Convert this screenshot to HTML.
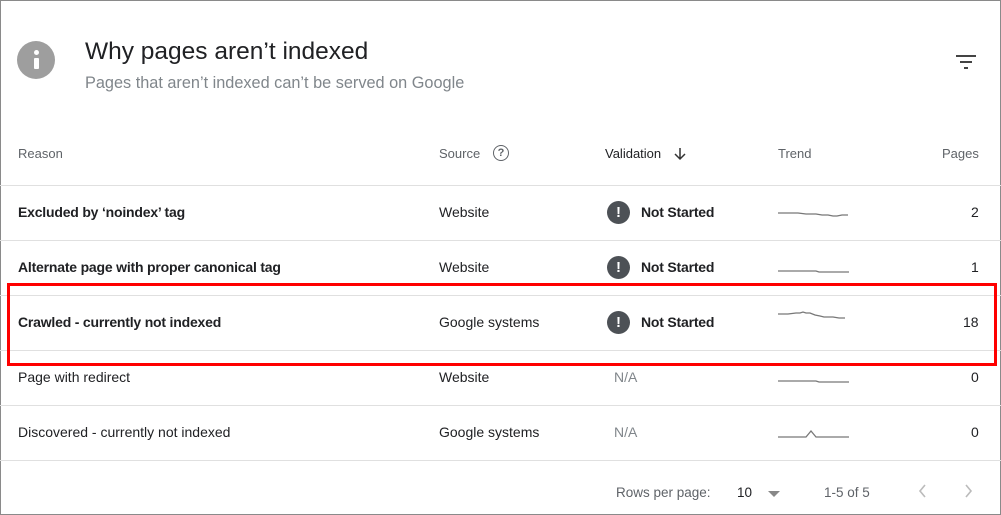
<!DOCTYPE html><html><head><style>
body{margin:0;width:1001px;height:515px;overflow:hidden;background:#fff;font-family:"Liberation Sans",Arial,sans-serif;position:relative}
.frame{position:absolute;left:0;top:0;width:999px;height:513px;border:1px solid #8a8a8a}
.a{position:absolute;white-space:nowrap}
.hl{position:absolute;left:0;width:1001px;height:1px;background:#e0e0e0}
.c{font-size:14px;color:#202124}
.b{font-weight:bold;letter-spacing:-0.2px}
.g{color:#5f6368}
.ex{position:absolute;left:607px;width:23px;height:23px;border-radius:50%;background:#4d5156;color:#fff;font-weight:bold;font-size:15px;text-align:center;line-height:23px}
</style></head><body>
<div class="frame"></div>
<div class="a" style="left:17px;top:41px;width:38px;height:38px;border-radius:50%;background:#9e9e9e"></div>
<div class="a" style="left:34px;top:50px;width:5px;height:5px;border-radius:50%;background:#fff"></div>
<div class="a" style="left:34px;top:58px;width:5px;height:11px;background:#fff;border-radius:1px"></div>
<div class="a" style="left:85px;top:38px;font-size:24.5px;color:#202124">Why pages aren’t indexed</div>
<div class="a" style="left:85px;top:74px;font-size:16.3px;color:#80868b">Pages that aren’t indexed can’t be served on Google</div>
<svg class="a" style="left:955px;top:54px" width="22" height="16"><path d="M1 2h20M5 8h12M9 14h4" stroke="#444" stroke-width="2"/></svg>
<div class="a c g" style="left:18px;top:146px;font-size:13px">Reason</div>
<div class="a c g" style="left:439px;top:146px;font-size:13px">Source</div>
<div class="a" style="left:493px;top:145px;width:14px;height:14px;border:1.5px solid #5f6368;border-radius:50%;font-size:11px;color:#5f6368;text-align:center;line-height:14px;font-weight:bold">?</div>
<div class="a c" style="left:605px;top:146px;font-size:13px">Validation</div>
<svg class="a" style="left:674px;top:147px" width="12" height="14"><path d="M6 1v11M1 7l5 5 5-5" stroke="#333" stroke-width="1.5" fill="none"/></svg>
<div class="a c g" style="left:778px;top:146px;font-size:13px">Trend</div>
<div class="a c g" style="left:942px;top:146px;font-size:13px">Pages</div>
<div class="hl" style="top:185px"></div><div class="hl" style="top:240px"></div><div class="hl" style="top:295px"></div><div class="hl" style="top:350px"></div><div class="hl" style="top:405px"></div><div class="hl" style="top:460px"></div>

<div class="a c b" style="left:18px;top:204px">Excluded by ‘noindex’ tag</div>
<div class="a c" style="left:439px;top:204px">Website</div>
<div class="ex" style="top:201px">!</div><div class="a c b" style="left:641px;top:204px">Not Started</div>
<div class="a c" style="left:971px;top:204px">2</div>

<div class="a c b" style="left:18px;top:259px">Alternate page with proper canonical tag</div>
<div class="a c" style="left:439px;top:259px">Website</div>
<div class="ex" style="top:256px">!</div><div class="a c b" style="left:641px;top:259px">Not Started</div>
<div class="a c" style="left:971px;top:259px">1</div>

<div class="a c b" style="left:18px;top:314px">Crawled - currently not indexed</div>
<div class="a c" style="left:439px;top:314px">Google systems</div>
<div class="ex" style="top:311px">!</div><div class="a c b" style="left:641px;top:314px">Not Started</div>
<div class="a c" style="left:963px;top:314px">18</div>

<div class="a c" style="left:18px;top:369px">Page with redirect</div>
<div class="a c" style="left:439px;top:369px">Website</div>
<div class="a c" style="left:614px;top:369px;color:#80868b">N/A</div>
<div class="a c" style="left:971px;top:369px">0</div>

<div class="a c" style="left:18px;top:424px">Discovered - currently not indexed</div>
<div class="a c" style="left:439px;top:424px">Google systems</div>
<div class="a c" style="left:614px;top:424px;color:#80868b">N/A</div>
<div class="a c" style="left:971px;top:424px">0</div>

<svg class="a" style="left:0;top:0" width="1001" height="515" fill="none" stroke="#777" stroke-width="1.3">
<path d="M778 213h20l8 1h10l6 1h6l5 1h4l5-1h6"/>
<path d="M778 271h38l3 1h30"/>
<path d="M778 314h10l8-1h4l3-1 3 1h4l5 2 5 1 4 1h9l6 1h6"/>
<path d="M778 381h38l3 1h30"/>
<path d="M778 437h28l5-6 5 6h33"/>
<rect x="8.5" y="284.5" width="987" height="80" stroke="#f00" stroke-width="3"/>
<path d="M925 485l-5 6 5 6M966 485l5 6-5 6" stroke="#bbb" stroke-width="1.6"/>
</svg>
<div class="a" style="left:616px;top:485px;font-size:13.5px;color:#5f6368">Rows per page:</div>
<div class="a" style="left:737px;top:485px;font-size:13.5px;color:#202124">10</div>
<div class="a" style="left:768px;top:491px;width:0;height:0;border-left:6px solid transparent;border-right:6px solid transparent;border-top:6px solid #888"></div>
<div class="a" style="left:824px;top:485px;font-size:13.5px;color:#5f6368">1-5 of 5</div>
</body></html>
